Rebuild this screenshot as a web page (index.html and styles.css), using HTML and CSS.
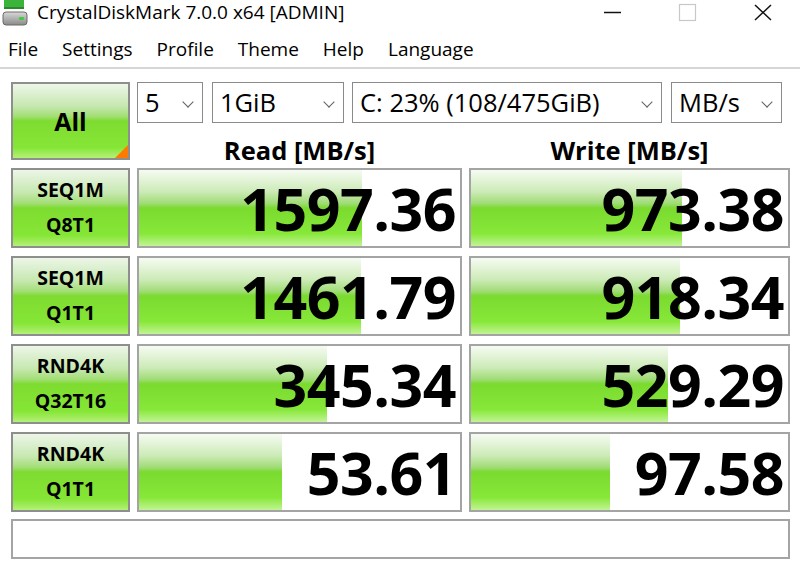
FILE: index.html
```html
<!DOCTYPE html>
<html lang="en">
<head>
    <meta charset="UTF-8">
    <title>CrystalDiskMark 7.0.0 x64 [ADMIN]</title>
    <link rel="stylesheet" href="styles.css">
</head>
<body>
    <div class="titlebar">
        <svg class="app-icon" width="28" height="28" viewBox="0 0 28 28">
            <defs>
                <linearGradient id="drive" x1="0" y1="0" x2="0" y2="1">
                    <stop offset="0" stop-color="#d8d8d8"/>
                    <stop offset="1" stop-color="#8a8a8a"/>
                </linearGradient>
            </defs>
            <rect x="4" y="-4" width="20" height="12" fill="#3cb43c"/>
            <rect x="4" y="7" width="20" height="2" fill="#2a8a2a"/>
            <rect x="3" y="12" width="24" height="13" rx="3" fill="url(#drive)" stroke="#6a6a6a" stroke-width="1"/>
            <rect x="19" y="17" width="5" height="3" rx="1" fill="#3ccf3c"/>
        </svg>
        <span class="title">CrystalDiskMark 7.0.0 x64 [ADMIN]</span>
        <div class="win-controls">
            <svg class="win-btn" width="20" height="20" viewBox="0 0 20 20"><line x1="1" y1="10.5" x2="18" y2="10.5" stroke="#111" stroke-width="1.5"/></svg>
            <svg class="win-btn" width="20" height="20" viewBox="0 0 20 20"><rect x="1.5" y="2.5" width="16" height="16" fill="none" stroke="#c8c8c8" stroke-width="1.2"/></svg>
            <svg class="win-btn" width="20" height="20" viewBox="0 0 20 20"><path d="M2 3 L18 18 M18 3 L2 18" stroke="#111" stroke-width="1.5"/></svg>
        </div>
    </div>

    <div class="menubar">
        <span>File</span>
        <span>Settings</span>
        <span>Profile</span>
        <span>Theme</span>
        <span>Help</span>
        <span>Language</span>
    </div>

    <div class="board">
        <div class="top">
            <div class="btn all-btn">All<span class="corner"></span></div>
            <div class="top-right">
                <div class="selects">
                    <div class="select sel-count">5<span class="chev"></span></div>
                    <div class="select sel-size">1GiB<span class="chev"></span></div>
                    <div class="select sel-drive">C: 23% (108/475GiB)<span class="chev"></span></div>
                    <div class="select sel-unit">MB/s<span class="chev"></span></div>
                </div>
                <div class="heads">
                    <div class="head head-read">Read [MB/s]</div>
                    <div class="head head-write">Write [MB/s]</div>
                </div>
            </div>
        </div>

        <div class="row">
            <div class="btn label">SEQ1M<br>Q8T1</div>
            <div class="cell read"><div class="fill" style="width: 69.6%"></div><span class="value">1597.36</span></div>
            <div class="cell write"><div class="fill" style="width: 66.6%"></div><span class="value">973.38</span></div>
        </div>
        <div class="row">
            <div class="btn label">SEQ1M<br>Q1T1</div>
            <div class="cell read"><div class="fill" style="width: 69.3%"></div><span class="value">1461.79</span></div>
            <div class="cell write"><div class="fill" style="width: 66%"></div><span class="value">918.34</span></div>
        </div>
        <div class="row">
            <div class="btn label">RND4K<br>Q32T16</div>
            <div class="cell read"><div class="fill" style="width: 58.7%"></div><span class="value">345.34</span></div>
            <div class="cell write"><div class="fill" style="width: 62.2%"></div><span class="value">529.29</span></div>
        </div>
        <div class="row">
            <div class="btn label">RND4K<br>Q1T1</div>
            <div class="cell read"><div class="fill" style="width: 44.7%"></div><span class="value">53.61</span></div>
            <div class="cell write"><div class="fill" style="width: 43.8%"></div><span class="value">97.58</span></div>
        </div>

        <div class="status"></div>
    </div>
</body>
</html>
```

FILE: styles.css
```css
body {
    margin: 0;
    background-color: #fff;
    color: #000;
    font-family: 'Open Sans', 'Noto Sans', sans-serif;
    width: 800px;
    height: 568px;
    overflow: hidden;
}
.titlebar {
    height: 30px;
    display: flex;
    align-items: flex-start;
}
.app-icon {
    margin-left: 0;
    margin-top: 0;
}
.title {
    margin-left: 9px;
    font-size: 19px;
    line-height: 24px;
}
.win-controls {
    margin-left: auto;
    display: flex;
    gap: 55px;
    padding-top: 2px;
    margin-right: 27px;
}
.menubar {
    height: 37px;
    display: flex;
    align-items: center;
    gap: 24px;
    padding-left: 8px;
    font-size: 19px;
    border-bottom: 2px solid #d6d6d6;
}
.board {
    display: flex;
    flex-direction: column;
    gap: 8px;
    padding: 13px 10px 0 11px;
}
.top {
    display: flex;
    gap: 7px;
    height: 78px;
}
.btn {
    box-sizing: border-box;
    border: 2px solid #8e8e8e;
    background: linear-gradient(#edf6e8 0%, #c6e8b0 30%, #a2de74 44%, #7edc30 50%, #86e636 86%, #b4f078 100%);
    font-weight: bold;
    display: flex;
    align-items: center;
    justify-content: center;
    text-align: center;
}
.all-btn {
    width: 119px;
    font-size: 25px;
    position: relative;
}
.corner {
    position: absolute;
    right: 0;
    bottom: 0;
    width: 0;
    height: 0;
    border-left: 13px solid transparent;
    border-bottom: 13px solid #ff7a00;
}
.top-right {
    flex: 1;
    display: flex;
    flex-direction: column;
}
.selects {
    display: flex;
    height: 41px;
}
.select {
    box-sizing: border-box;
    height: 41px;
    border: 1.5px solid #8a8a8a;
    background-color: #fff;
    font-size: 25.5px;
    line-height: 38px;
    padding-left: 7px;
    position: relative;
    white-space: nowrap;
}
.chev {
    position: absolute;
    right: 10px;
    top: 15px;
    width: 7px;
    height: 7px;
    border-right: 1.5px solid #606060;
    border-bottom: 1.5px solid #606060;
    transform: rotate(45deg);
}
.sel-count {
    width: 66px;
}
.sel-size {
    width: 132px;
    margin-left: 9px;
}
.sel-drive {
    width: 310px;
    margin-left: 8px;
}
.sel-unit {
    width: 111px;
    margin-left: 9px;
}
.heads {
    flex: 1;
    display: flex;
    align-items: flex-end;
}
.head {
    font-size: 25.5px;
    font-weight: bold;
    line-height: 24px;
    text-align: center;
    margin-bottom: -2px;
}
.head-read {
    width: 325px;
}
.head-write {
    width: 321px;
    margin-left: 7px;
}
.row {
    display: flex;
    gap: 7px;
    height: 80px;
}
.label {
    width: 119px;
    font-size: 19.5px;
    line-height: 35px;
    padding-bottom: 2px;
}
.cell {
    box-sizing: border-box;
    border: 2px solid #a4a4a4;
    background-color: #fff;
    position: relative;
    display: flex;
    align-items: center;
    justify-content: flex-end;
    padding-right: 4px;
}
.cell.read {
    width: 325px;
}
.cell.write {
    width: 321px;
}
.fill {
    position: absolute;
    left: 0;
    top: 0;
    bottom: 0;
    background: linear-gradient(#f6fbf2 0%, #cdebb8 28%, #a0dc76 44%, #7ada2e 50%, #88e83a 84%, #c2f496 100%);
}
.value {
    position: relative;
    font-size: 59px;
    font-weight: bold;
    line-height: 60px;
    letter-spacing: -0.5px;
}
.status {
    box-sizing: border-box;
    height: 40px;
    margin-top: -1px;
    border: 2px solid #a4a4a4;
    background-color: #fff;
}
```
